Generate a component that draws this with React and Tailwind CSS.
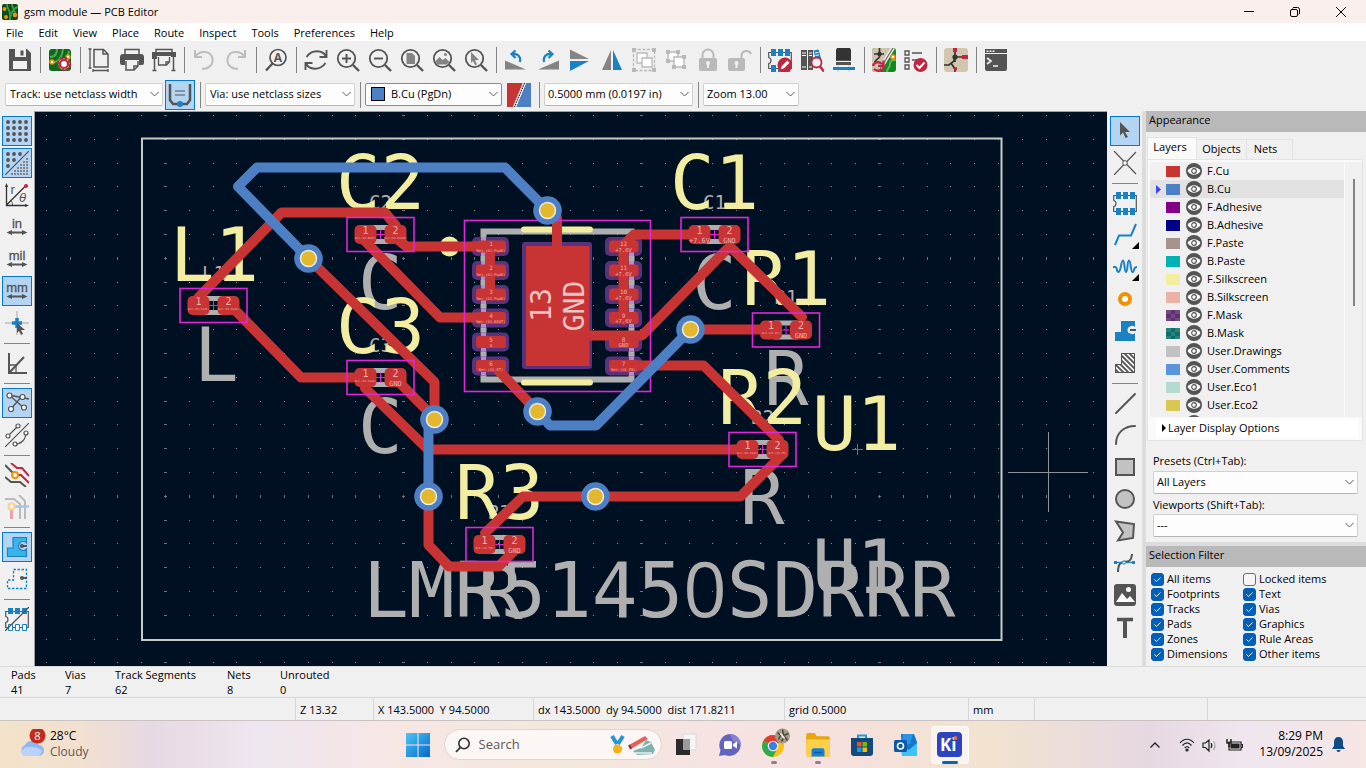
import React from "react";

const D = "#545454";
const B = "#1a81c4";
const R = "#bf2641";
const G = "#848484";
const L = "#b9b9b9";

function Ic({ children, size = 24 }) {
  return (
    <svg width={size} height={size} viewBox="0 0 24 24" fill="none" aria-hidden="true" className="shrink-0">
      {children}
    </svg>
  );
}

const Lens = ({ children }) => (
  <Ic>
    <circle cx="10.5" cy="10.5" r="8.7" stroke={D} strokeWidth="1.8" />
    <path d="M17 17l6 6" stroke={D} strokeWidth="2.4" />
    {children}
  </Ic>
);

const Chip = ({ children }) => (
  <Ic>
    <path d="M.7 4.5h22.6v16H.7v-5c3-.5 3-5.500 0-6z" fill="#f0f0f0" stroke={D} strokeWidth="1.2" />
    <path d="M3 1h5v7H3zM10 1h5v7h-5zM17 1h5v7h-5zM3 17h5v7H3zM10 17h5v7h-5zM17 17h5v7h-5z" fill={B} />
    {children}
  </Ic>
);

const icons = {
  save: (
    <Ic>
      <path d="M1 1h18l4 4v18H1z" fill={D} />
      <path d="M7 1h11v8H7zM5 13h14v8H5z" fill="#f0f0f0" />
      <path d="M12.500 2.500h3v5h-3z" fill={D} />
    </Ic>
  ),
  board: (
    <Ic>
      <rect x="1" y="1" width="22" height="22" rx="3" fill="#0b6b1c" />
      <path d="M2 9c5 0 7-3 7-8M2 15c8 0 12-5 13-14M12 15c5-2 8-6 9-12" stroke="#54a854" strokeWidth="2" />
      <circle cx="4" cy="14" r="2" fill="#fff" stroke="#f39200" strokeWidth="1.5" />
      <circle cx="20" cy="9" r="2" fill="#fff" stroke="#f39200" strokeWidth="1.5" />
      <circle cx="16" cy="16" r="5.500" fill="#fff" />
      <circle cx="16" cy="16" r="4" stroke={R} strokeWidth="2.2" />
      <circle cx="16" cy="16" r="6" stroke={R} strokeWidth="2.400" strokeDasharray="2.700 2" />
    </Ic>
  ),
  page: (
    <Ic>
      <path d="M6 1.500h9.500L20 6v13H6zM15 1.500V6h5" stroke={D} strokeWidth="1.500" />
      <path d="M2 1v19M.5 1h3M.5 20h3M5 22.500h15M5 21v3M20 21v3" stroke={D} strokeWidth="1.300" />
    </Ic>
  ),
  print: (
    <Ic>
      <path d="M5 6V1.500h14V6" stroke={D} strokeWidth="1.500" />
      <path d="M3 6h18a3 3 0 013 3v6a2 2 0 01-2 2h-3v-5H5v5H2a2 2 0 01-2-2V9a3 3 0 013-3z" fill={D} />
      <path d="M6 13v9h8l4-4v-5M14 22v-4h4" stroke={D} strokeWidth="1.500" />
    </Ic>
  ),
  plot: (
    <Ic>
      <path d="M4 4V1.500h16V4" stroke={D} strokeWidth="1.500" />
      <path d="M0 4h24v5h-5V8H5v3H0z" fill={D} />
      <path d="M2.500 9v14M21.500 9v14M.5 22.500h4M19.500 22.500h4" stroke={D} strokeWidth="1.500" />
      <path d="M6.500 9v8h8l3-3V9M14 17v-3h3" stroke={D} strokeWidth="1.300" />
    </Ic>
  ),
  undo: (
    <Ic>
      <path d="M3 2v7h7M3.500 8.500C8 2 19 2 20.500 11c.8 6-4 10-10.500 10" stroke="#bdbdbd" strokeWidth="2" />
    </Ic>
  ),
  redo: (
    <Ic>
      <path d="M21 2v7h-7M20.500 8.500C16 2 5 2 3.500 11c-.8 6 4 10 10.500 10" stroke="#bdbdbd" strokeWidth="2" />
    </Ic>
  ),
  find: (
    <Ic>
      <circle cx="14" cy="9.500" r="8" stroke={D} strokeWidth="1.700" />
      <path d="M8.500 15.500L2 22.500" stroke={D} strokeWidth="2.400" />
      <text x="14" y="14" fontSize="12" fontWeight="bold" textAnchor="middle" fontFamily="Open Sans, sans-serif" fill={D}>A</text>
    </Ic>
  ),
  refresh: (
    <Ic>
      <path d="M22.500 2v7h-7M22 8.500C19 2 8 1 2.500 9M1.500 22v-7h7M2 15.500C5 22 16 23 21.500 15" stroke={D} strokeWidth="1.900" />
    </Ic>
  ),
  zin: <Lens><path d="M10.500 6v9M6 10.500h9" stroke={D} strokeWidth="1.900" /></Lens>,
  zout: <Lens><path d="M6 10.500h9" stroke={D} strokeWidth="1.900" /></Lens>,
  zfit: <Lens><path d="M6.500 5h5.500l3 3v8h-8.500z" fill={G} /></Lens>,
  zobj: <Lens><path d="M3.500 13l4-4 3 3 3-2 4 4-3 2.500h-9z" fill={G} /><circle cx="13.500" cy="6.500" r="1.500" fill={G} /></Lens>,
  zsel: <Lens><path d="M7 4l8 8h-4l2 4.500-2 .8-2-4.300-2 2z" fill={G} /></Lens>,
  rccw: (
    <Ic>
      <path d="M1 12.500L22 21.500H1z" fill={G} />
      <path d="M8 6c6-1 9 3 8 8M11.500 2.500L7.500 6l4 4" stroke={B} strokeWidth="2.200" />
    </Ic>
  ),
  rcw: (
    <Ic>
      <path d="M23 12.500L2 21.500h21z" fill={G} />
      <path d="M16 6c-6-1-9 3-8 8M12.500 2.500l4 3.500-4 4" stroke={B} strokeWidth="2.200" />
    </Ic>
  ),
  fv: (
    <Ic>
      <path d="M2 1.500L21 11H2z" fill={G} />
      <path d="M2 23l19-10H2z" fill={B} />
    </Ic>
  ),
  fh: (
    <Ic>
      <path d="M11 2v20H2z" fill={G} />
      <path d="M13 2v20h9z" fill={B} />
    </Ic>
  ),
  group: (
    <Ic>
      <rect x="1.500" y="1.500" width="21" height="21" stroke={L} strokeWidth="1.300" strokeDasharray="3 1.500" />
      <path d="M0 0h4v4H0zM20 0h4v4h-4zM0 20h4v4H0zM20 20h4v4h-4z" fill={L} />
      <path d="M5 5h10v10H5z" fill="#fff" stroke={L} strokeWidth="1.300" />
      <path d="M10 10h10v9H10z" fill="#fff" stroke={L} strokeWidth="1.300" />
    </Ic>
  ),
  ungroup: (
    <Ic>
      <path d="M4 4h10v9H4z" fill="#fff" stroke={L} strokeWidth="1.300" />
      <path d="M10 9h10v10H10z" fill="#fff" stroke={L} strokeWidth="1.300" />
      <path d="M2 2h4v4H2zM12 2h4v4h-4zM2 11h4v4H2zM18 7h4v4h-4zM18 17h4v4h-4zM8 17h4v4H8z" fill={L} />
    </Ic>
  ),
  lock: (
    <Ic>
      <rect x="3" y="10" width="18" height="13" rx="2" fill={L} />
      <path d="M6.500 11V7a5.500 5.500 0 0111 0v4" stroke={L} strokeWidth="2" />
      <circle cx="12" cy="15" r="2" fill="#f0f0f0" />
      <path d="M11 15h2v5h-2z" fill="#f0f0f0" />
    </Ic>
  ),
  unlock: (
    <Ic>
      <rect x="0" y="10" width="17" height="13" rx="2" fill={L} />
      <path d="M13.500 11V7A5 5 0 0123 6" stroke={L} strokeWidth="2" />
      <circle cx="8.500" cy="15" r="2" fill="#f0f0f0" />
      <path d="M7.500 15h2v5h-2z" fill="#f0f0f0" />
    </Ic>
  ),
  fpedit: (
    <Chip>
      <circle cx="17" cy="17" r="7.500" fill={R} />
      <path d="M12.800 21.300l1-3.300 5.500-5.500 2.200 2.200-5.500 5.500z" fill="#fff" />
    </Chip>
  ),
  books: (
    <Ic>
      <path d="M1 2h6v20H1zM8 2h5v20H8z" fill={D} />
      <path d="M2 5h4M2 7.500h4M2 19h4M9 5h3M9 7.500h3M9 19h3" stroke="#fff" />
      <path d="M13.500 2.500l5-1 3.500 12-5 3z" fill={B} />
      <path d="M15 5l3.500-.7M15.500 7.500l3.500-.7" stroke="#fff" />
      <circle cx="16.500" cy="14.500" r="5" fill="#f3f3f3" stroke={R} strokeWidth="1.800" />
      <path d="M20 18.500l4 5" stroke={R} strokeWidth="2.500" />
    </Ic>
  ),
  chip3d: (
    <Ic>
      <path d="M5 0h13l1 2v10H4V2z" fill="#333" />
      <path d="M4 12h15v1H4zM4 14h15v3H4z" fill={D} />
      <path d="M6 17v7M17 17v7" stroke="#c9c9c9" />
      <path d="M1 19h22v3H1z" fill={B} />
    </Ic>
  ),
  update: (
    <Ic>
      <rect width="24" height="24" rx="3" fill="#128a1d" />
      <path d="M0 3a3 3 0 013-3h17L6 24H3a3 3 0 01-3-3z" fill="#cfc4ad" />
      <path d="M21 0L8 21" stroke="#f0f0f0" strokeWidth="4" />
      <path d="M21 0L8 21" stroke="#6a6a6a" strokeWidth="1.300" />
      <path d="M2 6h10M7.500 0v9l-5 5" stroke="#333" strokeWidth="1.700" />
      <circle cx="7.500" cy="6" r="2.200" fill="#333" />
      <path d="M15 24c0-5 3-3 3-8s4-4 6-4" stroke="#63b35f" strokeWidth="2" />
      <circle cx="21" cy="9" r="2" fill="#fff" stroke="#f39200" strokeWidth="1.500" />
      <path d="M1 18c1-4 6-5 9-2M11.500 12.500V18H6M12 19c-1 4-7 5-10 2" stroke={R} strokeWidth="2.300" />
    </Ic>
  ),
  drc: (
    <Ic>
      <path d="M1 3h4v4H1zM1 10h4v4H1zM1 17h4v4H1zM8 5h10M8 12h5" stroke={D} strokeWidth="1.300" />
      <circle cx="16.500" cy="17" r="7" fill={R} />
      <path d="M12.500 17l3 3 5-5.500" stroke="#fff" strokeWidth="2" />
    </Ic>
  ),
  netlist: (
    <Ic>
      <rect width="24" height="24" rx="3" fill="#d2c6af" />
      <path d="M11 0v9h8M11 9l-1 4-5 4H0M7 15l4 6v3M11 9v5" stroke="#333" strokeWidth="1.700" />
      <circle cx="11" cy="9" r="2.600" fill="#333" />
      <path d="M9 0h4v4H9zM18 7h6v4h-6zM9 20l4-1v3l-2 1z" fill={R} />
    </Ic>
  ),
  console: (
    <Ic>
      <path d="M1 1h22v4H1zM1 6h22v15a2 2 0 01-2 2H3a2 2 0 01-2-2z" fill={D} />
      <path d="M2.500 2.500h2v1.500h-2zM5.500 2.500h2v1.500h-2zM8.500 2.500h2v1.500h-2z" fill="#f0f0f0" />
      <path d="M3 10l4 3-4 3M9 18h5" stroke="#f0f0f0" strokeWidth="1.700" />
    </Ic>
  ),
  grid: (
    <Ic>
      {[3, 9, 15, 21].map((y) => [3, 9, 15, 21].map((x) => <circle key={x + "-" + y} cx={x} cy={y} r="1.900" fill={D} />))}
    </Ic>
  ),
  gridover: (
    <Ic>
      {[[3, 3], [9, 3], [15, 3], [3, 9], [9, 9], [3, 15]].map(([x, y]) => <circle key={x + "-" + y} cx={x} cy={y} r="1.900" fill={D} />)}
      {[0, 1, 2, 3, 4, 5].map((i) => Array.from({ length: i + 1 }, (_, j) => <rect key={i + "-" + j} x={21 - 3 * j} y={7 + 3 * i} width="2" height="2" fill={G} />))}
      <path d="M0 24L24 0" stroke={D} strokeWidth="1.200" />
    </Ic>
  ),
  polar: (
    <Ic>
      <path d="M1.500 2v20.500H22M1.500 22L20 3.500" stroke="#333" strokeWidth="1.300" />
      <path d="M1.500 0l1.500 4H0zM24 22.500L20 21v3z" fill="#333" />
      <path d="M7.500 22c0-2-.5-3.500-2-4.500" stroke={D} />
      <circle cx="21" cy="3" r="2" fill={R} />
      <text x="5.500" y="11" fontSize="13" fontFamily="Liberation Sans, sans-serif" fill={D}>r</text>
      <text x="14" y="19" fontSize="13" fontStyle="italic" fontFamily="Liberation Sans, sans-serif" fill={D}>θ</text>
    </Ic>
  ),
  inch: <Unit t="in" />,
  mil: <Unit t="mil" />,
  mm: <Unit t="mm" />,
  cursor: (
    <Ic>
      <path d="M0 12h24M12 0v24" stroke="#a5a5a5" />
      <path d="M7 12h10M12 7v10" stroke={B} strokeWidth="3.500" />
      <path d="M12 12l8 7h-4l2 4-2 1-2-4-2 2z" fill={D} />
    </Ic>
  ),
  angle: (
    <Ic>
      <path d="M4 2v20h18M4 22L19 6" stroke={D} strokeWidth="2" />
      <path d="M4 14h7v8" stroke={D} strokeWidth="1.300" />
    </Ic>
  ),
  rats: (
    <Ic>
      <path d="M4 4l15 3 5 1M4 4l15 13M17 5L6 18" stroke={D} strokeWidth="1.300" />
      {[[4.500, 4.500], [17.500, 6], [6, 18], [19, 16.500]].map(([x, y]) => <circle key={x} cx={x} cy={y} r="2.500" fill="#fff" stroke={D} strokeWidth="1.200" />)}
    </Ic>
  ),
  ratcurve: (
    <Ic>
      <path d="M0 24L24 0M3 13L13 3M21 9c0 8-5 12-11 12" stroke={D} strokeWidth="1.200" />
      {[[3, 13], [13, 3], [21, 10], [10, 21]].map(([x, y]) => <circle key={x} cx={x} cy={y} r="2" fill="#fff" stroke={D} strokeWidth="1.200" />)}
    </Ic>
  ),
  hicon: (
    <Ic>
      <path d="M0 2l9 9M0 14l6 5h9l6 5" stroke={D} strokeWidth="2" />
      <path d="M6 0l6 5h5l7 8M12 12h4l8 8" stroke={R} strokeWidth="2" />
      <circle cx="10" cy="12" r="3" fill="#fff" stroke="#f39200" strokeWidth="2" />
    </Ic>
  ),
  fade: (
    <Ic>
      <path d="M0 4h9l6 5v15M14 0l6 6v18" stroke={L} strokeWidth="2" />
      <path d="M8 11.500h16" stroke="#9fc9e6" strokeWidth="2.500" />
      <path d="M6.500 14v10" stroke="#e5a3b0" strokeWidth="3" />
      <circle cx="6.500" cy="11.500" r="3" fill="#fff" stroke="#f9d08c" strokeWidth="2" />
    </Ic>
  ),
  zfill: (
    <Ic>
      <path d="M8 2.500h13.500V8a4.500 4.500 0 100 6v7.500h-19V13H8z" fill="#39b4ea" stroke={B} strokeWidth="1.200" />
      <path d="M17 11h5" stroke={D} strokeWidth="2" /><circle cx="17" cy="11" r="2" fill={D} />
    </Ic>
  ),
  zout2: (
    <Ic>
      <path d="M8.500 2.500h13v19h-19v-8.500h6z" stroke={B} strokeWidth="1.300" strokeDasharray="2.500 1.500" />
      <path d="M17 11h5" stroke={D} strokeWidth="2" /><circle cx="17" cy="11" r="2" fill={D} />
    </Ic>
  ),
  padsk: (
    <Ic>
      <path d="M.7 4.500h22.600v16H.7v-5c3-.5 3-5.500 0-6z" stroke={D} strokeWidth="1.200" />
      <path d="M3 1h5v6H3zM10 1h5v6h-5zM17 1h5v6h-5z" fill={B} />
      <path d="M3.500 17.500h4v6h-4zM10.500 17.500h4v6h-4zM17.500 17.500h4v6h-4z" fill="#fff" stroke={B} />
      <path d="M0 24L24 0" stroke={D} strokeWidth="1.300" />
    </Ic>
  ),
  arrow: <Ic><path d="M7 3l10 10h-5l3 5-2.500 1-2.500-5.500-3 3z" fill={D} /></Ic>,
  cross: (
    <Ic>
      <path d="M1 0l22 23M23 1L1 24" stroke={D} strokeWidth="1.200" />
      <circle cx="12" cy="12" r="2.300" fill="#fff" stroke={D} />
    </Ic>
  ),
  fp: <Chip />,
  track: <Ic><path d="M2 22l4-9.500h12L23 1" stroke={B} strokeWidth="2" /></Ic>,
  tune: <Ic><path d="M0 12h2c3 0 1 5 3.500 5S8 5.500 10 5.500 11 17 13 17s1-11.500 3-11.500S17.500 17 19.500 17 20 12 24 12" stroke={B} strokeWidth="2" /></Ic>,
  via: <Ic><circle cx="12" cy="12" r="5" fill="#fff" stroke="#f39200" strokeWidth="4" /></Ic>,
  zone: (
    <Ic>
      <path d="M8 2h14v6a4 4 0 100 6v8H2v-9h6z" fill={B} />
      <circle cx="18" cy="11" r="3.500" fill="#eee" /><path d="M17 11h6" stroke={D} strokeWidth="2" />
    </Ic>
  ),
  hatch: (
    <Ic>
      <clipPath id="hz"><path d="M8 2h14v20H2v-9h6z" /></clipPath>
      <g clipPath="url(#hz)" stroke={D} strokeWidth="1.800">
        <path d="M-16 0l24 24M-11 0l24 24M-6 0l24 24M-1 0l24 24M4 0l24 24M9 0l24 24M14 0l24 24" />
        <path d="M8 2h14v20H2v-9h6z" strokeWidth="2" />
      </g>
    </Ic>
  ),
  line: <Ic><path d="M3 22L22 3" stroke={D} strokeWidth="2" strokeLinecap="round" /></Ic>,
  arc: <Ic><path d="M3 21C3 10 11 3 22 3" stroke={D} strokeWidth="2" strokeLinecap="round" /></Ic>,
  rect: <Ic><rect x="3" y="4" width="18" height="16" fill="#c2c2c2" stroke={D} strokeWidth="2" /></Ic>,
  circle: <Ic><circle cx="12" cy="12" r="9" fill="#c2c2c2" stroke={D} strokeWidth="2" /></Ic>,
  poly: <Ic><path d="M3 2.500l18 2.500-1 14L5 21.500l5-8z" fill="#c2c2c2" stroke={D} strokeWidth="2" /></Ic>,
  bezier: (
    <Ic>
      <path d="M5 21c0-18 13-3 14-18" stroke={D} strokeWidth="2" />
      <path d="M2 11.500h20" stroke={B} strokeWidth="1.300" />
      <path d="M1 10h3v3H1zM19 10h3v3h-3z" fill={B} /><circle cx="11" cy="11.500" r="1.600" fill="#fff" stroke={B} />
    </Ic>
  ),
  image: (
    <Ic>
      <rect x="1" y="1" width="22" height="22" rx="3" fill={D} />
      <circle cx="15.500" cy="6.500" r="2.500" fill="#fff" />
      <path d="M3 19l6-9 5 6 3-3 5 6z" fill="#fff" />
    </Ic>
  ),
  text: <Ic><path d="M12 3v20" stroke={D} strokeWidth="4" /><path d="M4 4.500h16" stroke={D} strokeWidth="3.500" /></Ic>,
  autow: (
    <Ic>
      <path d="M2 1v16l3 4h14l3-4V1" stroke={D} strokeWidth="2.500" />
      <path d="M7 8h10M7 12h10" stroke={D} strokeWidth="1.200" />
      <circle cx="12" cy="21" r="3" fill={B} />
    </Ic>
  ),
  layers: (
    <Ic>
      <path d="M0 0h16L6 24H0z" fill="#c83434" />
      <path d="M24 0h-5L9 24h15z" fill="#4d7fc4" />
      <path d="M17.500 0L7.500 24" stroke="#fff" strokeWidth="3" />
      <path d="M17.500 0L7.500 24" stroke="#222" strokeWidth="1.300" strokeDasharray="1.500 1" />
    </Ic>
  ),
};

function Unit({ t }) {
  return (
    <Ic>
      <text x="12" y="13" fontSize="13" textAnchor="middle" fontFamily="Liberation Sans, sans-serif" fill={D} stroke={D} strokeWidth=".3">{t}</text>
      <path d="M4 17.500h16" stroke={D} strokeWidth="2" />
      <path d="M1.500 17.500L7 15v5zM22.500 17.500L17 15v5z" fill={D} />
    </Ic>
  );
}

const topBar = [
  ["save", "Save"], 0, ["board", "Board Setup"], 0, ["page", "Page Settings"], ["print", "Print"], ["plot", "Plot"], 0,
  ["undo", "Undo"], ["redo", "Redo"], 0, ["find", "Find"], 0, ["refresh", "Refresh"], ["zin", "Zoom In"], ["zout", "Zoom Out"],
  ["zfit", "Zoom to Fit"], ["zobj", "Zoom to Objects"], ["zsel", "Zoom to Selection"], 0, ["rccw", "Rotate Counterclockwise"],
  ["rcw", "Rotate Clockwise"], ["fv", "Mirror Vertically"], ["fh", "Mirror Horizontally"], ["group", "Group"], ["ungroup", "Ungroup"],
  ["lock", "Lock"], ["unlock", "Unlock"], 0, ["fpedit", "Footprint Editor"], ["books", "Footprint Browser"], ["chip3d", "3D Viewer"], 0,
  ["update", "Update PCB from Schematic"], ["drc", "Design Rules Checker"], 0, ["netlist", "Schematic Editor"], 0, ["console", "Scripting Console"],
];
const leftBar = [
  ["grid", "Show Grid", 1], ["gridover", "Grid Overrides", 1], ["polar", "Polar Coordinates"], ["inch", "Inches"], ["mil", "Mils"],
  ["mm", "Millimeters", 1], ["cursor", "Full-Window Crosshairs"], 0, ["angle", "Constrain to 45 Degrees"], 0, ["rats", "Show Ratsnest", 1],
  ["ratcurve", "Curved Ratsnest"], 0, ["hicon", "Inactive Layer View"], ["fade", "Net Highlighting"], 0, ["zfill", "Zone Fills", 1],
  ["zout2", "Zone Outlines"], 0, ["padsk", "Sketch Pads"],
];
const rightBar = [
  ["arrow", "Select", 1], ["cross", "Local Ratsnest"], 0, ["fp", "Place Footprints"], ["track", "Route Tracks", 0, 1], ["tune", "Tune Length", 0, 1],
  ["via", "Place Vias"], ["zone", "Draw Zones"], ["hatch", "Draw Rule Areas"], 0, ["line", "Draw Lines"], ["arc", "Draw Arcs"],
  ["rect", "Draw Rectangles"], ["circle", "Draw Circles"], ["poly", "Draw Polygons"], ["bezier", "Draw Bezier"], ["image", "Place Images"], ["text", "Place Text"],
];

function ToolColumn({ items, width }) {
  return (
    <div className={"flex shrink-0 flex-col items-center bg-[#f0f0f0] pt-1 " + width}>
      {items.map((it, i) =>
        it === 0 ? (
          <div key={i} className="flex h-2 shrink-0 items-center"><div className="h-px w-[26px] bg-[#848484]" /></div>
        ) : (
          <button
            key={i}
            aria-label={it[1]}
            className={
              "relative my-px flex h-[30px] w-[30px] shrink-0 items-center justify-center border " +
              (it[2] ? "border-[#0078d7] bg-[#b3d5f3]" : "border-transparent")
            }
          >
            {icons[it[0]]}
            {it[3] ? (
              <svg className="absolute right-0 bottom-0" width="7" height="7" viewBox="0 0 7 7"><path d="M7 0v7H0z" fill="#000" /></svg>
            ) : null}
          </button>
        )
      )}
    </div>
  );
}

const Sep = () => <div className="flex w-2 shrink-0 justify-center"><div className="h-[26px] w-px bg-[#848484]" /></div>;

function Combo({ label, id, value, className, children, pad = "pl-1" }) {
  return (
    <div className={"relative h-[23px] shrink-0 " + className}>
      <select
        id={id}
        aria-label={label}
        className={"h-full w-full appearance-none rounded-[2px] border border-[#d0d0d0] border-b-[#b4b4b4] bg-[#fdfdfd] pr-5 pb-px outline-none " + pad}
      >
        <option>{value}</option>
      </select>
      {children}
      <svg className="pointer-events-none absolute top-2 right-1" width="9" height="7" viewBox="0 0 9 7" fill="none">
        <path d="M.5 1l4 4 4-4" stroke="#5a5a5a" />
      </svg>
    </div>
  );
}

/* ---------- board canvas ---------- */
const MONO = "DejaVu Sans Mono, monospace";
const gridDots = [];
const majorDots = [];
for (let i = 0; i < 45; i++)
  for (let j = 0; j < 24; j++) {
    const x = Math.round(46 + i * 23.8);
    const y = Math.round(115 + j * 23.8);
    gridDots.push(`M${x} ${y}h1v1h-1z`);
    if (i % 10 === 5) majorDots.push(`M${x - 1} ${y}h3v1h-3z`);
    if (j % 10 === 6) majorDots.push(`M${x} ${y - 1}h1v3h-1z`);
  }

const parts = [
  { r: "L1", x: 213.5, y: 305.5, a: "Net-(D1-PadK)", b: "Net-(D1-PadK)" },
  { r: "C2", x: 380.5, y: 234.5, a: "Net-(U1-BOOT)", b: "Net-(U1-PadSW)" },
  { r: "C3", x: 380.5, y: 377.5, a: "Net-(D1-PadK)", b: "GND" },
  { r: "C1", x: 714.5, y: 234.5, a: "+7.6V", b: "GND" },
  { r: "R1", x: 786, y: 330, a: "Net-(U1-RT)", b: "GND" },
  { r: "R2", x: 762.5, y: 449.5, a: "Net-(D1-PadK)", b: "Net-(U1-FB)" },
  { r: "R3", x: 499.5, y: 544.5, a: "Net-(U1-FB)", b: "GND" },
];
const silk = [
  ["L1", 170, 281], ["C2", 336, 209], ["C3", 336, 353], ["C1", 670, 209], ["R1", 742, 305], ["R2", 718, 424], ["R3", 455, 519],
];
const fab = [
  ["L", 194, 381], ["C", 358, 309], ["C", 358, 453], ["C", 692, 309], ["R", 764, 405], ["R", 740, 524], ["R", 478, 619],
];
const redTraces =
  "M198 298L281.500 212.500H385L396 226V238L406.500 246.500H491M490 246V294M364 240L440 317.500H491M232 307L301 377.500H365" +
  "M308.500 258.500L434.500 382V419.500M396 379L434.500 418M365 379V388L428 449.500H747M428.500 496.500V545L449 566.500H498.500L515 550" +
  "M485 533L523 496.500H740.500L783 454M779 440L703.500 365.500H622M690.500 329.500H770M730 246L642 335.500H570M729.500 246L802 317" +
  "M692 234.500H634L623.500 245V320M547.500 208L557 218V250M498 370L537.500 411.500";
const pinsL = ["Net-(D1-PadK)", "Net-(D1-PadK)", "Net-(D1-PadK)", "Net-(U1-BOOT)", "x", "Net-(U1-RT)"];
const pinsR = ["+7.6V", "+7.6V", "+7.6V", "+7.6V", "GND", "Net-(U1-FB)"];
const pinY = [246.500, 270.500, 294.500, 318, 342, 366];
const vias = [[308.500, 258.500], [547.500, 210.500], [690.500, 329.500], [537.500, 411.500], [434.500, 419.500], [428.500, 496.500], [595.500, 496.500]];
const PT = "#ecb0b0";

function NetLabel({ x, y, t }) {
  return (
    <text x={x} y={y} fontSize={t.length > 5 ? 2.700 : 7} textAnchor="middle" fontFamily={MONO} fill={PT}>{t}</text>
  );
}

function Board() {
  return (
    <svg className="h-full w-full" viewBox="35 112 1072 554" preserveAspectRatio="xMidYMid slice" role="img" aria-label="Board layout">
      <path d={gridDots.join("")} fill="#8a8f94" />
      <path d={majorDots.join("")} fill="#6f757c" />
      <rect x="142" y="138.500" width="859.500" height="501.500" fill="none" stroke="#c8cac6" strokeWidth="2" />
      <g fontFamily={MONO} fontSize="74" fill="#afafaf">
        {fab.map(([t, x, y], i) => <text key={i} x={x} y={y}>{t}</text>)}
        <text x="363" y="617" fontSize="76">LMR5145<tspan fontFamily="Open Sans, sans-serif">0</tspan>SDRRR</text>
        <text x="812" y="593">U1</text>
      </g>
      {parts.map((p) => (
        <g key={p.r}>
          <text x={p.x} y={p.y - 26} fontSize="19" fontFamily={MONO} textAnchor="middle" fill="#afafaf">{p.r}</text>
          <path d={`M${p.x - 12} ${p.y - 7}h24M${p.x - 12} ${p.y + 7}h24`} stroke="#afafaf" strokeWidth="5" />
        </g>
      ))}
      <rect x="483.500" y="231.500" width="148" height="148" fill="none" stroke="#afafaf" strokeWidth="6" />
      <g fontFamily={MONO} fontSize="74" fill="#f2eda1">
        {silk.map(([t, x, y]) => <text key={t} x={x} y={y}>{t}</text>)}
        <text x="812" y="450">U1</text>
      </g>
      <path d="M524 229.500h66M524 382.500h66" stroke="#f2eda1" strokeWidth="6" strokeLinecap="round" />
      <circle cx="449.500" cy="246.500" r="10" fill="#f2eda1" />
      {pinY.map((y) => (
        <g key={y}>
          <rect x="472" y={y - 9.500} width="37" height="19" rx="5" fill="#58327a" />
          <rect x="605" y={y - 9.500} width="37" height="19" rx="5" fill="#58327a" />
          <rect x="481" y={y - 9.500} width="5" height="19" fill="#b28ccc" />
          <rect x="629" y={y - 9.500} width="5" height="19" fill="#b28ccc" />
        </g>
      ))}
      <rect x="522" y="242" width="70" height="127" rx="3" fill="#58327a" />
      <path d={redTraces} fill="none" stroke="#c83434" strokeWidth="10" strokeLinecap="round" strokeLinejoin="round" />
      <g fill="none" stroke="#e026d8" strokeWidth="1.600">
        <rect x="464.500" y="220.500" width="186" height="171" />
        {parts.map((p) => <rect key={p.r} x={p.x - 33.500} y={p.y - 17} width="67" height="34" />)}
        {parts.map((p) => <path key={p.r + "c"} d={`M${p.x - 5} ${p.y}h10M${p.x} ${p.y - 5}v10`} strokeWidth="1" />)}
        <path d="M852 449.500h11M857.500 444v11" strokeWidth="1" />
      </g>
      <rect x="526" y="246" width="63.500" height="120" fill="#c83434" />
      {pinY.map((y, i) => (
        <g key={y}>
          <rect x="476" y={y - 6} width="30" height="12" rx="3" fill="#c83434" />
          <rect x="609" y={y - 6} width="29.500" height="12" rx="3" fill="#c83434" />
          <text x="491" y={y - 0.500} fontSize="6" textAnchor="middle" fontFamily={MONO} fill={PT}>{i + 1}</text>
          <text x="623.500" y={y - 0.500} fontSize="6" textAnchor="middle" fontFamily={MONO} fill={PT}>{12 - i}</text>
          <text x="491" y={y + 5} fontSize={pinsL[i].length > 5 ? 3.700 : 5} textAnchor="middle" fontFamily={MONO} fill={PT}>{pinsL[i]}</text>
          <text x="623.500" y={y + 5} fontSize={pinsR[i].length > 5 ? 3.700 : 5.500} textAnchor="middle" fontFamily={MONO} fill={PT}>{pinsR[i]}</text>
        </g>
      ))}
      <g transform="rotate(-90)" fontFamily={MONO} fontSize="28" textAnchor="middle" fill="#f0c4c4">
        <text x="-305" y="551">13</text>
        <text x="-306" y="584">GND</text>
      </g>
      {parts.map((p) => (
        <g key={p.r}>
          <rect x={p.x - 26} y={p.y - 9.500} width="22" height="19" rx="5" fill="#c83434" />
          <rect x={p.x + 4} y={p.y - 9.500} width="22" height="19" rx="5" fill="#c83434" />
          <g fontSize="10" fontFamily={MONO} textAnchor="middle" fill={PT}>
            <text x={p.x - 15} y={p.y - 1}>1</text>
            <text x={p.x + 15} y={p.y - 1}>2</text>
          </g>
          <NetLabel x={p.x - 15} y={p.y + (p.a.length > 5 ? 4 : 8)} t={p.a} />
          <NetLabel x={p.x + 15} y={p.y + (p.b.length > 5 ? 4 : 8)} t={p.b} />
        </g>
      ))}
      <path
        d="M547.500 210.500L505 167.500H257L238 186.500L308.500 258.500M690.500 329.500L596 425.500H550L537.500 411.500M434.500 419.500L428.500 426V496.500"
        fill="none" stroke="#4d7fc4" strokeWidth="10" strokeLinecap="round" strokeLinejoin="round"
      />
      {vias.map(([x, y]) => (
        <g key={x}>
          <circle cx={x} cy={y} r="14.300" fill="#4d7fc4" />
          <circle cx={x} cy={y} r="8" fill="#e3b72e" stroke="#ececec" strokeWidth="1.500" />
        </g>
      ))}
      <path d="M1008 472.500h80M1048.500 432v80" stroke="#8d9297" strokeWidth="1" />
    </svg>
  );
}

/* ---------- appearance panel ---------- */
const layers = [
  ["F.Cu", "bg-[#c83434]"], ["B.Cu", "bg-[#4d7fc4]"], ["F.Adhesive", "bg-[#840084]"], ["B.Adhesive", "bg-[#000084]"],
  ["F.Paste", "bg-[#a5948c]"], ["B.Paste", "bg-[#00b2b2]"], ["F.Silkscreen", "bg-[#f2eda1]"], ["B.Silkscreen", "bg-[#e8b2a7]"],
  ["F.Mask", "bg-[#5f2f72]"], ["B.Mask", "bg-[#0b7068]"], ["User.Drawings", "bg-[#c2c2c2]"], ["User.Comments", "bg-[#5994dc]"],
  ["User.Eco1", "bg-[#b4dbd2]"], ["User.Eco2", "bg-[#d8c852]"], ["", "bg-[#c2c2c2]"],
];
const filters = [
  ["All items", 1], ["Locked items", 0], ["Footprints", 1], ["Text", 1], ["Tracks", 1], ["Vias", 1],
  ["Pads", 1], ["Graphics", 1], ["Zones", 1], ["Rule Areas", 1], ["Dimensions", 1], ["Other items", 1],
];

function Eye() {
  return (
    <svg width="16" height="16" viewBox="0 0 16 16" fill="none" aria-hidden="true">
      <circle cx="8" cy="8" r="8" fill="#545454" />
      <path d="M1.500 8c3-5 10-5 13 0-3 5-10 5-13 0z" fill="#fff" />
      <circle cx="8" cy="8" r="2.300" stroke="#545454" strokeWidth="1.200" />
    </svg>
  );
}

function Panel() {
  return (
    <aside className="flex w-[220px] shrink-0 flex-col bg-[#f0f0f0]">
      <h2 className="flex h-[21px] shrink-0 items-center bg-[#b9b9b9] pb-0.5 pl-[3px]">Appearance</h2>
      <div className="mt-1.5 flex h-[21px] shrink-0 items-end pl-px" role="tablist">
        <button role="tab" aria-selected="true" className="h-[22px] w-[50px] border border-b-0 border-[#e3e3e3] bg-[#fafafa] pr-1 pb-0.5">Layers</button>
        <button role="tab" className="h-5 w-[50px] border border-b-0 border-l-0 border-[#e3e3e3]">Objects</button>
        <button role="tab" className="h-5 w-[46px] border border-b-0 border-l-0 border-[#e3e3e3] pr-2">Nets</button>
      </div>
      <div className="mr-[3px] ml-px shrink-0 border border-[#e3e3e3] bg-[#fafafa] pb-px">
        <div className="flex h-[257px] pt-0.5 pl-0.5">
          <ul className="flex-1 overflow-hidden bg-[#f0f0f0]">
            {layers.map(([n, c], i) => (
              <li key={c + i} className={"flex h-[18px] items-center " + (i === 1 ? "bg-[#e2e2e2]" : "")}>
                <span className="flex w-4 justify-center">
                  {i === 1 && <svg width="5" height="9" viewBox="0 0 5 9"><path d="M0 0l5 4.500L0 9z" fill="#3f3fff" /></svg>}
                </span>
                <span className={"h-[11px] w-3.5 " + c}>
                  {(n === "F.Mask" || n === "B.Mask") && (
                    <svg width="14" height="11" viewBox="0 0 14 11"><path d="M0 0h5v4H0zM9 0h5v4H9zM5 4h4v4H5zM0 8h5v3H0zM9 8h5v3H9z" fill="#fff" fillOpacity=".13" /></svg>
                  )}
                </span>
                <button aria-label="Toggle layer visibility" className="mr-[5px] ml-1.5"><Eye /></button>
                <span>{n}</span>
              </li>
            ))}
          </ul>
          <div className="ml-px flex w-[17px] justify-center bg-[#f0f0f0] pt-[17px]"><div className="h-[127px] w-0.5 bg-[#858585]" /></div>
        </div>
        <button className="mx-2 mt-0.5 mb-px flex h-[19px] w-[202px] items-center bg-white pb-px pl-1.5">
          <svg className="mr-0.5" width="4" height="8" viewBox="0 0 4 8"><path d="M0 0l4 4-4 4z" /></svg>
          Layer Display Options
        </button>
      </div>
      <div className="flex shrink-0 flex-col pt-3 pr-2 pl-[7px]">
        <label htmlFor="presets" className="mb-0.5 h-4 leading-4">Presets (Ctrl+Tab):</label>
        <Combo id="presets" value="All Layers" className="w-full" pad="pl-[3px]" />
        <label htmlFor="viewports" className="mt-[3px] mb-px h-4 leading-4">Viewports (Shift+Tab):</label>
        <Combo id="viewports" value="---" className="w-full" pad="pl-[3px]" />
      </div>
      <div className="mt-[5px] h-1 shrink-0 bg-[#dcdcdc]" />
      <h2 className="flex h-[21px] shrink-0 items-center bg-[#b9b9b9] pb-0.5 pl-[3px]">Selection Filter</h2>
      <div className="grid shrink-0 grid-cols-[92px_1fr] pt-[5px] pl-[5px]">
        {filters.map(([n, on]) => (
          <label key={n} className="flex h-[15px] items-center gap-[3px]">
            <span className="relative flex h-[13px] w-[13px]">
              <input type="checkbox" defaultChecked={!!on} className="peer h-[13px] w-[13px] appearance-none rounded-[3px] border border-[#6b6b6b] bg-[#f6f6f6] checked:border-[#005fb8] checked:bg-[#005fb8]" />
              <svg className="pointer-events-none absolute inset-0 hidden peer-checked:block" width="13" height="13" viewBox="0 0 13 13" fill="none">
                <path d="M3.500 6.500l2 2 4-4" stroke="#fff" />
              </svg>
            </span>
            {n}
          </label>
        ))}
      </div>
    </aside>
  );
}

/* ---------- taskbar ---------- */
const Task = ({ label, children, mark, active }) => (
  <button aria-label={label} className="relative flex h-full w-11 shrink-0 items-center justify-center">
    <span className={"flex h-[38px] w-[38px] items-center justify-center rounded " + (active ? "border border-white/70 bg-white/60" : "")}>{children}</span>
    {mark && <span className="absolute bottom-1 h-[3px] w-1.5 rounded-full bg-[#8a8585]" />}
    {active && <span className="absolute bottom-1 h-[3px] w-4 rounded-full bg-[#0067c0]" />}
  </button>
);

function Taskbar() {
  return (
    <footer className="flex h-12 shrink-0 items-center border-t border-[#c8c2c2] bg-[linear-gradient(90deg,#f3e3c9_0%,#f2e0d0_6%,#e6d9e3_11%,#eee6f0_19%,#f6e6e6_27%,#f3e8dc_42%,#f6e3e3_52%,#f5e0dc_62%,#f2e3d0_72%,#e6d8e2_84%,#efe6f0_91%,#f6e6e4_100%)]">
      <div className="flex flex-1 items-center pl-[18px]">
        <svg width="30" height="32" viewBox="0 0 30 32" className="mr-0.5" aria-hidden="true">
          <path d="M7 27a6 6 0 010-11 8 8 0 0114 0 5.500 5.500 0 01-1 11z" fill="#8fb8f2" />
          <path d="M3 23c3-6 10-7 21-2-1 4-2 6-5 6H7c-2 0-3.500-2-4-4z" fill="#b9d2fa" />
          <circle cx="19.500" cy="6.500" r="8" fill="#c42b1c" />
          <text x="19.500" y="10.500" fontSize="11" textAnchor="middle" fontFamily="Open Sans, sans-serif" fill="#fff">8</text>
        </svg>
        <div className="pb-0.5 text-[12px] leading-4">
          <div>28°C</div>
          <div className="text-[#5c5757]">Cloudy</div>
        </div>
      </div>
      <div className="flex h-full items-center pl-[3px]">
        <Task label="Start">
          <Ic><path d="M0 0h11.500v11.500H0zM12.500 0H24v11.500H12.500zM0 12.500h11.500V24H0zM12.500 12.500H24V24H12.500z" fill="url(#wg)" /><defs><linearGradient id="wg" x1="0" y1="0" x2="1" y2="1"><stop stopColor="#4cc5f5" /><stop offset="1" stopColor="#0568c8" /></linearGradient></defs></Ic>
        </Task>
        <label className="mr-0.5 ml-1 flex h-[31px] w-[218px] items-center rounded-full border border-[#e2d3d0] bg-[#fcf6f4] pr-1 pl-2.5">
          <svg width="16" height="16" viewBox="0 0 16 16" fill="none" aria-hidden="true"><circle cx="9" cy="6.500" r="5.200" stroke="#333" strokeWidth="1.600" /><path d="M5.300 10.300L1 15" stroke="#333" strokeWidth="1.800" /></svg>
          <input aria-label="Search" placeholder="Search" className="ml-2 w-0 flex-1 bg-transparent text-[13px] outline-none placeholder:text-[#5c5757]" />
          <svg width="50" height="28" viewBox="0 0 50 28" fill="none" aria-hidden="true">
            <path d="M5 5l5 8M16 5l-5 8" stroke="#2595d6" strokeWidth="4" /><circle cx="10.500" cy="18" r="4.500" fill="#f3b11c" />
            <path d="M22 14L38 5l3 3-17 10z" fill="#e0635c" /><path d="M22 14l2 4" stroke="#8b2a35" strokeWidth="2" />
            <path d="M26 20l8-3 5-8 5 2 4 8-2 4-16 1z" fill="#7fb1b1" /><path d="M34 17l10-5M26 22l19 0" stroke="#e6f2f0" strokeWidth="1.600" />
          </svg>
        </label>
        <Task label="Task view">
          <Ic><path d="M9 1h13v16H9z" fill="#f7f5f4" stroke="#d8d8d8" /><path d="M2 6h14v16H2z" fill="#2b2b2b" /><path d="M9 6h7v11H9z" fill="#9b9b9b" /></Ic>
        </Task>
        <Task label="Chat">
          <Ic><path d="M12 1a11 11 0 11-5 21l-6 1 1.500-6A11 11 0 0112 1z" fill="#6264c0" /><path d="M12 1a11 11 0 0111 11l-8-4z" fill="#8a7fd6" /><rect x="6" y="8" width="8" height="8" rx="1.500" fill="#fff" /><path d="M15 11l4-2.500v7L15 13z" fill="#fff" /></Ic>
        </Task>
        <Task label="Chrome" mark>
          <svg width="34" height="34" viewBox="-2 -2 34 34" aria-hidden="true">
            <circle cx="14" cy="16" r="11" fill="#fbc116" />
            <path d="M14 16L4.500 10.500A11 11 0 0123.500 10.500z" fill="#e33b2e" />
            <path d="M14 16L4.500 10.500A11 11 0 0014 27l4-8z" fill="#2da94f" />
            <circle cx="14" cy="16" r="5.300" fill="#fff" /><circle cx="14" cy="16" r="4.200" fill="#3a7fe8" />
            <circle cx="23.500" cy="6" r="7.500" fill="#a79a87" />
            <path d="M18.500 2.500l3 3-2 4M23.500-.5l1 6 5-2M22.500 11.500l3-5 3 4" stroke="#3e4b38" strokeWidth="1.500" fill="none" /><path d="M21.500 3.500l4 5" stroke="#eee3e3" strokeWidth="2" />
          </svg>
        </Task>
        <Task label="File Explorer" mark>
          <Ic size={26}><path d="M1 3a2 2 0 012-2h6l2 3h10a2 2 0 012 2v15a1.500 1.500 0 01-1.500 1.500h-19A1.500 1.500 0 011 21z" fill="#e9a70f" /><path d="M1 7h22v14a1.500 1.500 0 01-1.500 1.500h-19A1.500 1.500 0 011 21z" fill="#fdd04c" /><path d="M6 22.500V17a2 2 0 012-2h8a2 2 0 012 2v5.500z" fill="#1683d8" /><path d="M8 19h8" stroke="#0a5ca8" strokeWidth="1.500" /></Ic>
        </Task>
        <Task label="Microsoft Store">
          <Ic><path d="M8 5V2.500h8V5" stroke="#1a9be0" strokeWidth="2" /><path d="M1 5h22v15a3 3 0 01-3 3H4a3 3 0 01-3-3z" fill="#14497e" /><path d="M7 9h4.500v4.500H7z" fill="#f25022" /><path d="M12.500 9H17v4.500h-4.500z" fill="#7fba00" /><path d="M7 14.500h4.500V19H7z" fill="#00a4ef" /><path d="M12.500 14.500H17V19h-4.500z" fill="#ffb900" /></Ic>
        </Task>
        <Task label="Outlook">
          <Ic><path d="M7 1h13l3 8v12a2 2 0 01-2 2H8z" fill="#1476cf" /><path d="M7 12l8 5 8-7v11a2 2 0 01-2 2H8z" fill="#3cc3f2" /><path d="M9 1h10l-3 10-8 2z" fill="#2a93e3" /><rect y="7" width="13" height="12" rx="1.500" fill="#0c59a8" /><circle cx="6.500" cy="13" r="3" stroke="#fff" strokeWidth="1.600" /></Ic>
        </Task>
        <Task label="KiCad" active>
          <svg width="25" height="25" viewBox="0 0 25 25" aria-hidden="true"><rect width="25" height="25" rx="4" fill="#2b44c4" /><text x="3" y="19" fontSize="17" fontWeight="bold" fontFamily="Open Sans, sans-serif" fill="#fff">Ki</text><circle cx="18.500" cy="6" r="2" fill="#f26b1d" /></svg>
        </Task>
      </div>
      <div className="flex flex-1 items-center justify-end pr-5">
        <svg width="12" height="8" viewBox="0 0 12 8" fill="none" className="mr-[18px]" aria-hidden="true"><path d="M1.500 6.500L6 2l4.500 4.500" stroke="#222" strokeWidth="1.300" /></svg>
        <svg width="64" height="18" viewBox="0 0 64 18" fill="none" stroke="#222" strokeWidth="1.200" className="mr-4" aria-hidden="true">
          <path d="M1 7c4-5 10-5 14 0M3.500 9.500c3-3.500 6-3.500 9 0M5.700 12c1.500-1.700 3-1.700 4.600 0" /><circle cx="8" cy="14" r="1" fill="#222" />
          <path d="M24 7h2.500L30 4v11l-3.500-3.500H24zM32 7c1 1.500 1 3.500 0 5" /><path d="M34.500 5c2 3 2 6 0 9" stroke="#aaa" />
          <path d="M50 6h12v8H50z" /><path d="M52 8h8v4h-8z" fill="#222" /><path d="M62 8.500h1.500v3H62" /><path d="M48 3v4h4V3M50 7v4" strokeWidth="1.500" />
        </svg>
        <div className="mr-2 pb-0.5 text-right text-[12px] leading-4">
          <div>8:29 PM</div>
          <div>13/09/2025</div>
        </div>
        <svg width="15" height="17" viewBox="0 0 15 17" aria-hidden="true"><path d="M7.500 1c3 0 4.500 2 4.500 5v4l2 3H1l2-3V6c0-3 1.500-5 4.500-5zM5.500 14h4a2 2 0 01-4 0z" fill="#124a86" /></svg>
      </div>
    </footer>
  );
}

const stats = [
  ["Pads", "41", "w-[54px]"], ["Vias", "7", "w-[50px]"], ["Track Segments", "62", "w-[112px]"], ["Nets", "8", "w-[53px]"], ["Unrouted", "0", "w-[80px]"],
];
const status = [
  ["Z 13.32", "w-[78px]"], ["X 143.5000  Y 94.5000", "w-[160px]"], ["dx 143.5000  dy 94.5000  dist 171.8211", "w-[251px]"],
  ["grid 0.5000", "w-[184px]"], ["mm", "w-[66px]"], ["", "w-[173px]"], ["", "flex-1"],
];

export default function App() {
  return (
    <div className="flex h-screen flex-col overflow-hidden bg-[#f0f0f0] font-['Open_Sans','Noto_Sans',sans-serif] text-[11px] text-black">
      <header className="flex h-[23px] shrink-0 items-center bg-[#f9f0ee] pr-0.5 pl-0.5">
        <svg width="16" height="16" viewBox="0 0 16 16" fill="none" className="mr-1.5" aria-hidden="true">
          <rect width="16" height="16" rx="2" fill="#0b4b1c" />
          <path d="M5 0c0 6 3 5 3 10v6M10 0c0 5 3 5 3 10M16 3c-5 1-8 8-8 13" stroke="#3f9c46" strokeWidth="1.800" />
          <circle cx="2.500" cy="5" r="2" fill="#f39200" /><circle cx="13" cy="11" r="2.300" fill="#f39200" /><circle cx="4" cy="13" r="2" fill="#f39200" />
        </svg>
        <h1 className="flex-1 pt-0.5">gsm module — PCB Editor</h1>
        <button aria-label="Minimize" className="flex w-[46px] justify-center"><svg width="10" height="10" viewBox="0 0 10 10"><path d="M0 4.500h10" stroke="#000" /></svg></button>
        <button aria-label="Restore" className="flex w-[46px] justify-center"><svg width="10" height="10" viewBox="0 0 10 10" fill="none" stroke="#000"><rect x=".5" y="2.500" width="7" height="7" rx="1.500" /><path d="M2.500 1.500A1.500 1.500 0 014 .5h3.500a2 2 0 012 2V6a1.500 1.500 0 01-1 1.500" /></svg></button>
        <button aria-label="Close" className="flex w-[46px] justify-center"><svg width="10" height="10" viewBox="0 0 10 10"><path d="M0 0l10 10M10 0L0 10" stroke="#000" /></svg></button>
      </header>
      <nav className="flex h-[18px] shrink-0 items-center gap-[15px] bg-white pt-0.5 pl-1.5">
        <button>File</button>
        <button>Edit</button>
        <button>View</button>
        <button>Place</button>
        <button>Route</button>
        <button>Inspect</button>
        <button>Tools</button>
        <button>Preferences</button>
        <button>Help</button>
      </nav>
      <div className="flex h-[38px] shrink-0 items-center pl-1">
        {topBar.map((it, i) =>
          it === 0 ? <Sep key={i} /> : (
            <button key={i} aria-label={it[1]} className="flex h-8 w-8 shrink-0 items-center justify-center">{icons[it[0]]}</button>
          )
        )}
      </div>
      <div className="flex h-8 shrink-0 items-center pb-px pl-[5px]">
        <Combo label="Track width" value="Track: use netclass width" className="w-[158px]" />
        <button aria-label="Use existing track width" className="mr-px ml-0.5 flex h-[30px] w-[30px] shrink-0 items-center justify-center border border-[#0078d7] bg-[#b3d5f3]">{icons.autow}</button>
        <Sep />
        <Combo label="Via size" value="Via: use netclass sizes" className="mr-px ml-px w-[150px]" />
        <Sep />
        <Combo label="Active layer" value="B.Cu (PgDn)" className="ml-px w-[137px] [&>select]:border-[#8a8a8a]" pad="pl-[25px]">
          <span className="pointer-events-none absolute top-1 left-1.5 h-[14px] w-[14px] border border-black bg-[#4d7fc4]" />
        </Combo>
        <button aria-label="Layer pair" className="mr-1 ml-[5px]">{icons.layers}</button>
        <Sep />
        <Combo label="Grid" value="0.5000 mm (0.0197 in)" className="mr-px ml-px w-[149px]" pad="pl-[3px]" />
        <Sep />
        <Combo label="Zoom" value="Zoom 13.00" className="ml-px w-[96px]" pad="pl-[3px]" />
      </div>
      <div className="flex min-h-0 flex-1">
        <ToolColumn items={leftBar} width="w-[34px]" />
        <main className="min-w-0 flex-1 border-t border-l border-[#a0a0a0] bg-[#001023]">
          <Board />
        </main>
        <ToolColumn items={rightBar} width="w-[35px]" />
        <div className="w-1 shrink-0 bg-[#dcdcdc]" />
        <Panel />
      </div>
      <dl className="flex h-[31px] shrink-0 border-t border-[#dcdcdc] pl-[11px]">
        {stats.map(([a, b, w]) => (
          <div key={a} className={"leading-[15px] " + w}>
            <dt className="whitespace-nowrap">{a}</dt>
            <dd>{b}</dd>
          </div>
        ))}
      </dl>
      <div className="flex h-[23px] shrink-0 border-t border-[#d7d7d7] pl-[295px] leading-[23px]">
        {status.map(([t, w], i) => (
          <div key={i} className={"border-l border-[#d7d7d7] pl-1 whitespace-pre " + w}>{t}</div>
        ))}
      </div>
      <Taskbar />
    </div>
  );
}
